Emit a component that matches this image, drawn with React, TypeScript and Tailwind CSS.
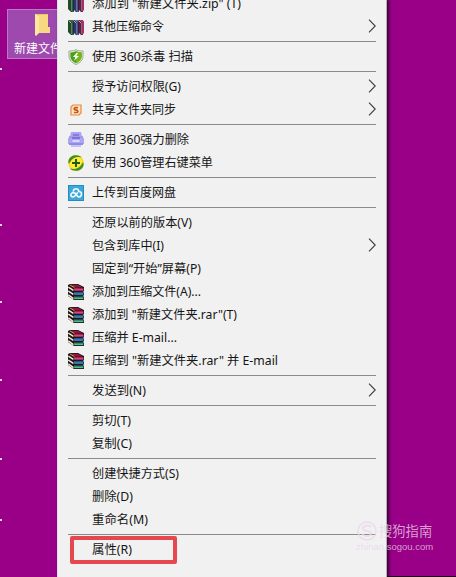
import type { ReactNode } from 'react';

function BooksUpright() {
  return (
    <svg width="16" height="16" viewBox="0 0 16 16">
      <path d="M0 1H2L5 4V16H3L0 13Z" fill="#1e4a24" />
      <path d="M2 1H5L6 3V16H4V4Z" fill="#276b3b" />
      <path d="M5 1H7L10 4V16H8L5 13Z" fill="#30336f" />
      <path d="M8 1H10L11 3V16H9V4Z" fill="#3e62ae" />
      <path d="M10 1H12L15 4V16H13L10 13Z" fill="#611d45" />
      <path d="M12 1H15L16 3V14L14 16V4Z" fill="#a5316b" />
      <path d="M.5 1.5L3.5 4.5M5.5 1.5L8.5 4.5M10.5 1.5L13.5 4.5" stroke="#cfc8b0" strokeWidth=".9" />
      <path d="M3.5 5V15M8.5 5V15M13.5 5V15" stroke="#a7b6b2" strokeOpacity=".7" strokeWidth=".7" />
      <path d="M5.3 3V15M10.3 3V15" stroke="#171923" strokeWidth=".6" />
    </svg>
  );
}

function BookStack() {
  return (
    <svg width="16" height="16" viewBox="0 0 16 16">
      <path d="M0 1L2 0H10L16 3V7L15 8L16 9V11L15 12L16 13V16H6L0 12Z" fill="#1f171b" />
      <path d="M2 .8H9.8L15 3.6H6.5Z" fill="#8f1640" />
      <path d="M6 4.2H15.5V6.6H6Z" fill="#cf2461" />
      <path d="M6 8.2H15.5V10.8H6Z" fill="#2068b0" />
      <path d="M6 12.6H15.5V15.2H6Z" fill="#279569" />
      <path d="M.3 3.2L5.4 6.4M.3 7L5.4 10.4M.3 10.8L5.4 14.6" stroke="#f4eed8" strokeWidth="1.4" />
      <path d="M6.5 5.9H15M6.5 10.1H15M6.5 14.5H15" stroke="#fff" strokeOpacity=".4" strokeWidth=".7" />
      <path d="M2 1L6.4 3.6" stroke="#dfb735" strokeWidth=".9" />
    </svg>
  );
}

function Shield() {
  return (
    <svg width="16" height="16" viewBox="0 0 16 16">
      <path d="M8 .5L10 1.7L15 2V7C15 11 12 14 8 15.5C4 14 1 11 1 7V2L6 1.7Z" fill="#eef2df" stroke="#829b7a" strokeWidth=".8" />
      <path d="M8 2L10 3L13.7 3.4V7C13.7 10.5 11 13 8 14.3C5 13 2.3 10.5 2.3 7V3.4L6 3Z" fill="#4ba020" />
      <path d="M8 2L10 3L13.7 3.4V7C13.7 10.5 11 13 8 14.3Z" fill="#79b41b" />
      <path d="M8.5 4L5 8H7.3L6.2 11.7L11 6.9H8.4L10 4Z" fill="#fff" />
    </svg>
  );
}

function SyncS() {
  return (
    <svg width="12" height="12" viewBox="0 0 12 12">
      <path d="M3 1H11V9L9 11H1V3Z" fill="#ffe5c4" stroke="#e58a3b" strokeWidth="1.2" />
      <path d="M8 3.6H5.4C3.8 3.6 3.8 5.7 5.4 5.9L6.7 6.1C8.3 6.4 8.3 8.5 6.5 8.5H4" fill="none" stroke="#cb5518" strokeWidth="1.7" />
    </svg>
  );
}

function Shredder() {
  return (
    <svg width="16" height="16" viewBox="0 0 16 16">
      <path d="M3 0H13L14 5H2Z" fill="#aaa4f1" />
      <rect x="5" y="2" width="6" height="3" fill="#857ddd" />
      <path d="M1 4H15V12H1Z" fill="#a29af0" />
      <path d="M0 6H16V12H0Z" fill="#aca5f2" />
      <path d="M4 5H12V7H4Z" fill="#7e75d8" />
      <path d="M4.5 8H11.5V10H4.5Z" fill="#d9d6fd" />
      <path d="M1 11H15V13H1Z" fill="#928ae3" />
      <path d="M3 13H13V15H3Z" fill="#c5c0f5" />
    </svg>
  );
}

function PlusBall() {
  return (
    <svg width="16" height="16" viewBox="0 0 16 16">
      <circle cx="8" cy="8" r="7.8" fill="#f6d91e" />
      <path d="M.4 6C1 2 5 0 8 .2C11 .2 13 1.2 14 2.5C9 1 4 3 1.5 8C.7 9 .3 8 .4 6ZM15.6 10C15 14 11 16 8 15.8C5 15.8 3 14.8 2 13.5C7 15 12 13 14.5 8C15.3 7 15.7 8 15.6 10Z" fill="#438f20" />
      <ellipse cx="8" cy="8" rx="6.5" ry="5" transform="rotate(-40 8 8)" fill="#ffeb36" />
      <path d="M7 4H9V7H12V9H9V12H7V9H4V7H7Z" fill="#205c17" />
    </svg>
  );
}

function CloudDisk() {
  return (
    <svg width="16" height="16" viewBox="0 0 16 16">
      <rect x=".5" y=".5" width="15" height="15" fill="#3ca8dd" stroke="#298bbb" />
      <path d="M5.3 6.5C5.3 2.8 10.7 2.8 10.7 6.5C14.4 6.2 14.4 11.9 10.9 11.9C8.7 11.9 8.5 8.2 6.2 7.8C2.1 7 2 12 5.1 11.9C7.7 11.9 7.6 8.5 9.9 7.8" fill="none" stroke="#f0faff" strokeWidth="1.7" />
    </svg>
  );
}

type Item = { label: string; width: number; icon?: ReactNode; arrow?: boolean; boxed?: boolean };

const groups: Item[][] = [
  [
    { label: '添加到 "新建文件夹.zip" (T)', width: 149, icon: <BooksUpright /> },
    { label: '其他压缩命令', width: 72, icon: <BooksUpright />, arrow: true },
  ],
  [{ label: '使用 360杀毒 扫描', width: 101, icon: <Shield /> }],
  [
    { label: '授予访问权限(G)', width: 89, arrow: true },
    { label: '共享文件夹同步', width: 84, icon: <SyncS />, arrow: true },
  ],
  [
    { label: '使用 360强力删除', width: 97, icon: <Shredder /> },
    { label: '使用 360管理右键菜单', width: 121, icon: <PlusBall /> },
  ],
  [{ label: '上传到百度网盘', width: 84, icon: <CloudDisk /> }],
  [
    { label: '还原以前的版本(V)', width: 100 },
    { label: '包含到库中(I)', width: 72, arrow: true },
    { label: '固定到“开始”屏幕(P)', width: 109 },
    { label: '添加到压缩文件(A)...', width: 109, icon: <BookStack /> },
    { label: '添加到 "新建文件夹.rar"(T)', width: 145, icon: <BookStack /> },
    { label: '压缩并 E-mail...', width: 85, icon: <BookStack /> },
    { label: '压缩到 "新建文件夹.rar" 并 E-mail', width: 186, icon: <BookStack /> },
  ],
  [{ label: '发送到(N)', width: 54, arrow: true }],
  [
    { label: '剪切(T)', width: 39 },
    { label: '复制(C)', width: 40 },
  ],
  [
    { label: '创建快捷方式(S)', width: 87 },
    { label: '删除(D)', width: 41 },
    { label: '重命名(M)', width: 56 },
  ],
  [{ label: '属性(R)', width: 40, boxed: true }],
];

function MenuRow({ item }: { item: Item }) {
  return (
    <div className="relative flex h-[23px] items-center pl-[10px] pr-[10px]">
      <div className="flex w-4 shrink-0 items-center justify-center">{item.icon}</div>
      <svg className="ml-2 h-[23px] w-0 min-w-0 grow overflow-visible" aria-label={item.label}>
        <text x="0" y="16" textLength={item.width} lengthAdjust="spacingAndGlyphs" fill="#151515">
          {item.label}
        </text>
      </svg>
      {item.arrow && (
        <svg width="8" height="14" viewBox="0 0 8 14" className="relative -top-px shrink-0">
          <path d="M1 .7L7.2 7L1 13.3" fill="none" stroke="#3c3c3c" strokeWidth="1.1" />
        </svg>
      )}
      {item.boxed && <div className="absolute -top-[2px] left-[12px] h-[28px] w-[107px] rounded-[2px] border-4 border-[#e5484e]" />}
    </div>
  );
}

export default function App() {
  return (
    <main className="relative h-[577px] w-[456px] overflow-hidden bg-[#990087] font-['Noto_Sans','Noto_Sans_CJK_SC',sans-serif] text-[12px]">
      <div className="absolute left-[7px] top-[9px] flex h-[50px] w-[74px] flex-col items-center border border-[#b87ac9] bg-[#9d49ad] pt-[3px] text-white">
        <svg width="18" height="24" viewBox="0 0 18 24" className="-ml-[4px]">
          <path d="M2 1H15V14H17V20H5L2 22Z" fill="#eac66c" />
          <path d="M2 1L6 3V20L3 23L2 22Z" fill="#ffe9a0" />
          <path d="M6 2H15V14H17V20H6Z" fill="#f6d980" />
        </svg>
        <span className="mt-[3px] whitespace-nowrap leading-[18px]">新建文件夹</span>
      </div>
      {[68, 224, 301, 379, 458, 519].map((top) => (
        <i key={top} className="absolute left-0 h-[2px] w-[2px] bg-[#eed4ec]" style={{ top }} />
      ))}
      <div className="absolute bottom-0 left-[387px] right-0 h-px bg-[#24001f]" />
      <div className="absolute left-[57px] top-0 h-[577px] w-[330px] border-l border-r border-l-[#dbe4e5] border-r-[#b4b0b4] bg-[#f1f1f1] shadow-[2px_0_3px_rgba(30,0,30,0.8)]">
        <div className="-mt-2">
          {groups.map((group, index) => (
            <section key={index}>
              {index > 0 && (
                <div className="flex h-[7px] items-center pl-[10px] pr-[10px]">
                  <div className="h-px w-full bg-[#8b8b8b]" />
                </div>
              )}
              {group.map((item) => <MenuRow key={item.label} item={item} />)}
            </section>
          ))}
        </div>
      </div>
      <div className="absolute left-[356px] top-[520px] text-[#ead5e9]/75">
        <div className="flex h-[21px] items-center">
          <svg width="22" height="20" viewBox="0 0 22 20">
            <circle cx="11" cy="10" r="9" fill="none" stroke="currentColor" strokeWidth="1.5" />
            <path d="M15 6C12 3 6 5 7 8C8 11 15 9 15 12C15 16 9 16 6 13" fill="none" stroke="currentColor" strokeWidth="2" />
          </svg>
          <span className="ml-px whitespace-nowrap text-[13.3px] leading-5">搜狗指南</span>
        </div>
        <div className="whitespace-nowrap font-['Liberation_Sans',sans-serif] text-[9.5px] leading-[12px]">zhinan.sogou.com</div>
      </div>
    </main>
  );
}
